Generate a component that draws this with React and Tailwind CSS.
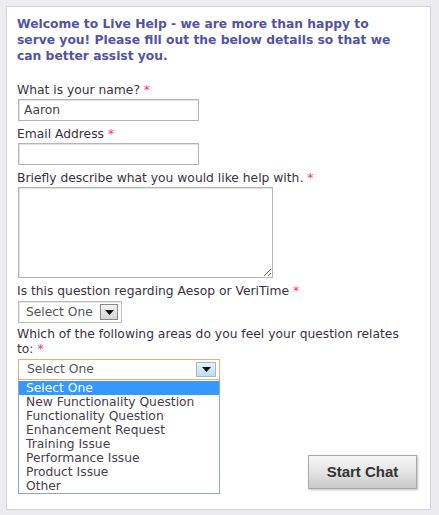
import { useState } from "react";

const areas = [
  "Select One",
  "New Functionality Question",
  "Functionality Question",
  "Enhancement Request",
  "Training Issue",
  "Performance Issue",
  "Product Issue",
  "Other",
];

function Label({ children, className = "" }) {
  return (
    <div className={`text-[12.3px] leading-[16px] text-[#3b3142] ${className}`}>
      {children} <span className="text-[#ff2f6e]">*</span>
    </div>
  );
}

function Arrow() {
  return (
    <svg width="9" height="5" viewBox="0 0 9 5">
      <path d="M0 0h9L4.5 5z" fill="#111" />
    </svg>
  );
}

export default function App() {
  const [name, setName] = useState("Aaron");
  const [selected] = useState(0);

  return (
    <div
      className="w-[439px] h-[515px] bg-[#ececee] pt-[6px] pl-[6px] pr-[8px] pb-[5px]"
      style={{ fontFamily: '"DejaVu Sans", Verdana, sans-serif' }}
    >
      <div className="h-full border border-[#cfd2e0] bg-white pl-[10px] pt-[9px] pr-[13px]">
        <h1 className="text-[12.3px] leading-[16px] font-bold text-[#5153a6] pr-[20px]">
          Welcome to Live Help - we are more than happy to serve you! Please fill out
          the below details so that we can better assist you.
        </h1>

        <Label className="mt-[18px]">What is your name?</Label>
        <input
          value={name}
          onChange={(e) => setName(e.target.value)}
          className="ml-[1px] mt-[1px] block w-[181px] h-[22px] border border-[#b5b5b5] px-[5px] text-[12.3px] text-[#444] outline-none shadow-[inset_1px_1px_1px_#e2e2e2]"
        />

        <Label className="mt-[5px]">Email Address</Label>
        <input className="ml-[1px] mt-[1px] block w-[181px] h-[22px] border border-[#b5b5b5] px-[5px] text-[12px] outline-none shadow-[inset_1px_1px_1px_#e2e2e2]" />

        <Label className="mt-[5px]">Briefly describe what you would like help with.</Label>
        <textarea className="ml-[1px] mt-[1px] block w-[255px] h-[91px] min-h-[91px] border border-[#b5b5b5] text-[12px] outline-none shadow-[inset_1px_1px_1px_#e2e2e2]" />

        <Label className="mt-[5px]">Is this question regarding Aesop or VeriTime</Label>
        <div className="ml-[1px] mt-[2px] flex items-center w-[104px] h-[22px] border border-[#bdbdbd] pl-[7px] pr-[3px] shadow-[inset_1px_1px_1px_#e6e6e6]">
          <span className="flex-1 text-[12.3px] text-[#555]">Select One</span>
          <span className="flex items-center justify-center w-[18px] h-[16px] border border-[#888] bg-gradient-to-b from-[#f4f4f4] to-[#d4d4d4]">
            <Arrow />
          </span>
        </div>

        <div className="mt-[4px] text-[12.3px] leading-[15px] text-[#3b3142]">
          <div>Which of the following areas do you feel your question relates</div>
          <div>
            to: <span className="text-[#ff2f6e]">*</span>
          </div>
        </div>

        <div className="mt-[2px] flex items-end justify-between">
          <div className="ml-[1px] w-[202px]">
            <div className="flex items-center h-[21px] border border-[#e1b56a] pl-[8px] pr-[3px] bg-white">
              <span className="flex-1 text-[12.3px] text-[#555]">Select One</span>
              <span className="flex items-center justify-center w-[20px] h-[15px] border border-[#9fb8cf] bg-gradient-to-b from-[#e6f2fb] to-[#bfdcf1]">
                <Arrow />
              </span>
            </div>
            <div className="border border-[#8fa6bd] border-t-0 pt-[1px]">
              {areas.map((a, i) => (
                <div
                  key={a}
                  className={`h-[14px] pl-[7px] text-[12.3px] leading-[14px] ${
                    i === selected ? "bg-[#3399ff] text-white" : "text-[#4a3d4c]"
                  }`}
                >
                  {a}
                </div>
              ))}
            </div>
          </div>
          <button
            className="mb-[5px] w-[109px] h-[34px] border border-[#a9a9a9] bg-gradient-to-b from-[#f7f7f7] via-[#e4e4e4] to-[#c9c9c9] text-[15px] font-bold text-[#333] shadow-[1px_1px_2px_#bbb]"
            style={{ fontFamily: '"Liberation Sans", Arial, sans-serif' }}
          >
            Start Chat
          </button>
        </div>
      </div>
    </div>
  );
}
